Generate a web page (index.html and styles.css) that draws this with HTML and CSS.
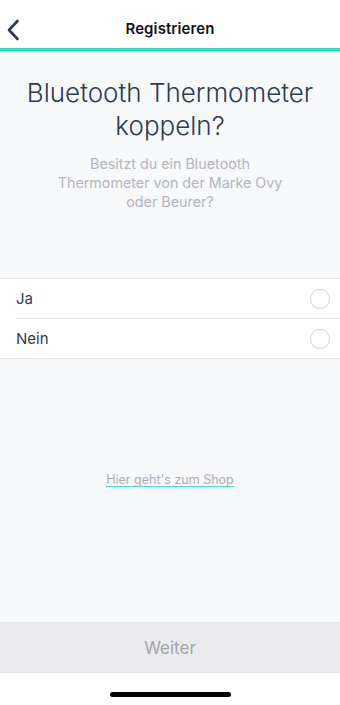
FILE: index.html
```html
<!DOCTYPE html>
<html lang="de">
<head>
<meta charset="utf-8">
<title>Registrieren</title>
<link rel="stylesheet" href="styles.css">
</head>
<body>
<div class="screen">
  <header class="nav">
    <button class="back" aria-label="Zurück">
      <svg width="14" height="22" viewBox="0 0 14 22"><path d="M11.5 2 L3 11 L11.5 20" fill="none" stroke="#2b3950" stroke-width="2.6" stroke-linecap="round" stroke-linejoin="round"/></svg>
    </button>
    <div class="nav-title">Registrieren</div>
  </header>
  <main class="content">
    <section class="intro">
      <h1 class="headline">Bluetooth Thermometer koppeln?</h1>
      <p class="sub">Besitzt du ein Bluetooth<br>Thermometer von der Marke Ovy<br>oder Beurer?</p>
    </section>
    <ul class="options">
      <li class="option first"><span class="label">Ja</span><span class="radio"></span></li>
      <li class="option"><span class="label">Nein</span><span class="radio"></span></li>
    </ul>
    <div class="shop"><a class="shop-link" href="#">Hier geht's zum Shop</a></div>
  </main>
  <footer class="footer">
    <button class="next">Weiter</button>
    <div class="home-area"><span class="home-indicator"></span></div>
  </footer>
</div>
</body>
</html>
```
FILE: styles.css
```css
* { box-sizing: border-box; }
html, body { margin: 0; padding: 0; }
body {
  font-family: Inter, "Noto Sans", "Liberation Sans", sans-serif;
  background: #ffffff;
}
.screen {
  width: 340px;
  height: 705px;
  display: flex;
  flex-direction: column;
  background: #f8f9fb;
  overflow: hidden;
}
.nav {
  height: 51px;
  background: #ffffff;
  border-bottom: 3px solid #1ee3c4;
  display: flex;
  align-items: center;
  justify-content: center;
  position: relative;
  padding-top: 9px;
}
.back {
  position: absolute;
  left: 6px;
  top: 18px;
  background: none;
  border: 0;
  padding: 0;
  width: 16px;
  height: 24px;
  display: flex;
  align-items: center;
}
.nav-title {
  font-size: 15px;
  font-weight: 600;
  color: #111418;
  letter-spacing: 0.1px;
}
.content {
  flex: 1;
  display: flex;
  flex-direction: column;
}
.intro {
  padding: 25px 10px 0;
  text-align: center;
  height: 227px;
}
.headline {
  margin: 0;
  font-size: 26px;
  font-weight: 300;
  line-height: 33px;
  color: #2e3b50;
}
.sub {
  margin: 12px 0 0;
  font-size: 14.3px;
  line-height: 19px;
  color: #b2b5bb;
  font-weight: 400;
}
.options {
  list-style: none;
  margin: 0;
  padding: 0;
  background: #ffffff;
  border-bottom: 1px solid #e6e7ea;
}
.option {
  height: 40px;
  display: flex;
  align-items: center;
  justify-content: space-between;
  margin-left: 16px;
  padding-right: 10px;
  border-top: 1px solid #e6e7ea;
}
.option.first {
  margin-left: 0;
  padding-left: 16px;
}
.label {
  font-size: 15px;
  color: #2e3b50;
}
.radio {
  width: 20px;
  height: 20px;
  border-radius: 50%;
  border: 1px solid #cfd1d4;
  background: #ffffff;
}
.shop {
  flex: 1;
  display: flex;
  justify-content: center;
  align-items: flex-start;
  padding-top: 115px;
}
.shop-link {
  font-size: 12.5px;
  line-height: 12px;
  color: #a9acb2;
  text-decoration: none;
  border-bottom: 1.5px solid #3ee5c9;
}
.footer {
  background: #ffffff;
}
.next {
  display: block;
  width: 100%;
  height: 51px;
  border: 0;
  border-top: 1px solid #e4e5e7;
  border-bottom: 1px solid #e4e5e7;
  background: #ebebed;
  font-family: inherit;
  font-size: 17px;
  color: #a3a5a9;
  padding: 0;
}
.home-area {
  height: 32px;
  display: flex;
  justify-content: center;
  padding-top: 19px;
}
.home-indicator {
  width: 121px;
  height: 5px;
  border-radius: 3px;
  background: #000000;
}
```
